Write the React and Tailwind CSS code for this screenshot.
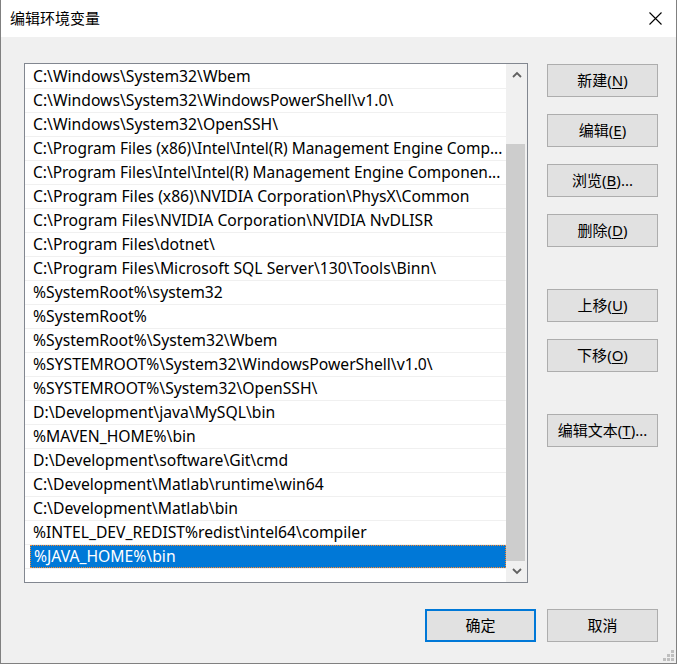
import React from "react";

const items = [
  "C:\\Windows\\System32\\Wbem",
  "C:\\Windows\\System32\\WindowsPowerShell\\v1.0\\",
  "C:\\Windows\\System32\\OpenSSH\\",
  "C:\\Program Files (x86)\\Intel\\Intel(R) Management Engine Comp...",
  "C:\\Program Files\\Intel\\Intel(R) Management Engine Componen...",
  "C:\\Program Files (x86)\\NVIDIA Corporation\\PhysX\\Common",
  "C:\\Program Files\\NVIDIA Corporation\\NVIDIA NvDLISR",
  "C:\\Program Files\\dotnet\\",
  "C:\\Program Files\\Microsoft SQL Server\\130\\Tools\\Binn\\",
  "%SystemRoot%\\system32",
  "%SystemRoot%",
  "%SystemRoot%\\System32\\Wbem",
  "%SYSTEMROOT%\\System32\\WindowsPowerShell\\v1.0\\",
  "%SYSTEMROOT%\\System32\\OpenSSH\\",
  "D:\\Development\\java\\MySQL\\bin",
  "%MAVEN_HOME%\\bin",
  "D:\\Development\\software\\Git\\cmd",
  "C:\\Development\\Matlab\\runtime\\win64",
  "C:\\Development\\Matlab\\bin",
  "%INTEL_DEV_REDIST%redist\\intel64\\compiler",
  "%JAVA_HOME%\\bin",
];

function Btn({ label, u, suffix = "", className = "", primary = false }) {
  return (
    <div
      className={
        "w-[111px] h-[33px] bg-[#e1e1e1] flex items-center justify-center text-[15px] text-black " +
        (primary ? "border-2 border-[#0078d7] " : "border border-[#adadad] ") +
        className
      }
    >
      {u ? (
        <span>
          {label}(<span className="underline underline-offset-2">{u}</span>){suffix}
        </span>
      ) : (
        <span>{label}</span>
      )}
    </div>
  );
}

export default function App() {
  return (
    <div
      className="w-[677px] h-[664px] bg-[#f0f0f0] border-l border-r border-b border-[#808080] flex flex-col relative text-black"
      style={{ fontFamily: '"Noto Sans", "Noto Sans CJK SC", sans-serif' }}
    >
      <div className="h-[37px] bg-white flex items-center justify-between pl-[9px] pr-[14px] shrink-0">
        <span className="text-[15px] leading-none">编辑环境变量</span>
        <svg width="13" height="13" viewBox="0 0 13 13">
          <path d="M0.5 0.5 L12.5 12.5 M12.5 0.5 L0.5 12.5" stroke="#000" strokeWidth="1.1" />
        </svg>
      </div>
      <div className="flex pl-[23px] pt-[26px]">
        <div className="w-[504px] h-[520px] border border-[#828790] bg-white flex">
          <div className="flex-1 flex flex-col pt-[1px] overflow-hidden">
            {items.map((t, i) => {
              const sel = i === items.length - 1;
              const long = t.length > 56;
              return (
                <div key={i} className="h-[24px] border-b border-[#f0f0f0] shrink-0 flex">
                  <div
                    className={
                      "ml-[5px] flex-1 flex items-center pl-[3px] whitespace-nowrap overflow-hidden " +
                      (long ? "text-[15.45px] " : "text-[15.7px] ") +
                      (sel ? "bg-[#0078d7] text-white border border-dotted border-[#ff8728] pl-[2px]" : "")
                    }
                  >
                    {t}
                  </div>
                </div>
              );
            })}
          </div>
          <div className="w-[21px] bg-[#f0f0f0] flex flex-col shrink-0">
            <div className="h-[21px] flex items-center justify-center shrink-0">
              <svg width="10" height="7" viewBox="0 0 10 7">
                <path d="M1 6 L5 2 L9 6" stroke="#606060" strokeWidth="1.8" fill="none" />
              </svg>
            </div>
            <div className="h-[59px] shrink-0" />
            <div className="flex-1 bg-[#cdcdcd] mr-[2px]" />
            <div className="h-[21px] flex items-center justify-center shrink-0">
              <svg width="10" height="7" viewBox="0 0 10 7">
                <path d="M1 1 L5 5 L9 1" stroke="#606060" strokeWidth="1.8" fill="none" />
              </svg>
            </div>
          </div>
        </div>
        <div className="ml-[19px] pt-[1px] flex flex-col">
          <Btn label="新建" u="N" />
          <Btn label="编辑" u="E" className="mt-[17px]" />
          <Btn label="浏览" u="B" suffix="..." className="mt-[17px]" />
          <Btn label="删除" u="D" className="mt-[17px]" />
          <Btn label="上移" u="U" className="mt-[42px]" />
          <Btn label="下移" u="O" className="mt-[17px]" />
          <Btn label="编辑文本" u="T" suffix="..." className="mt-[42px]" />
        </div>
      </div>
      <div className="flex justify-end gap-[11px] pr-[18px] mt-[26px]">
        <Btn label="确定" primary />
        <Btn label="取消" />
      </div>
      <svg className="absolute right-[2px] bottom-[2px]" width="11" height="11" viewBox="0 0 11 11">
        <rect x="8" y="0" width="3" height="3" fill="#bfbfbf" />
        <rect x="4" y="4" width="3" height="3" fill="#bfbfbf" />
        <rect x="8" y="4" width="3" height="3" fill="#bfbfbf" />
        <rect x="0" y="8" width="3" height="3" fill="#bfbfbf" />
        <rect x="4" y="8" width="3" height="3" fill="#bfbfbf" />
        <rect x="8" y="8" width="3" height="3" fill="#bfbfbf" />
      </svg>
    </div>
  );
}
